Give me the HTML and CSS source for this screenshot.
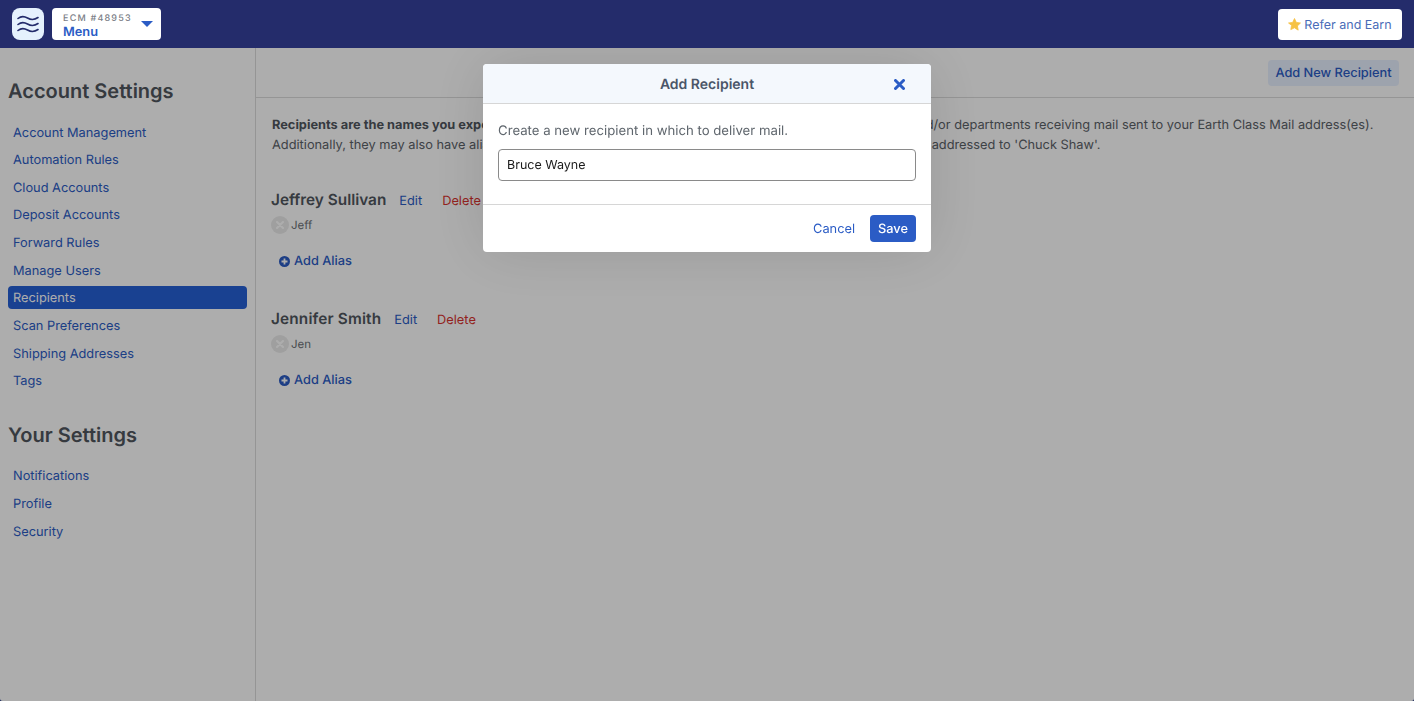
FILE: index.html
```html
<!DOCTYPE html>
<html lang="en">
<head>
<meta charset="utf-8">
<title>Recipients</title>
<link rel="stylesheet" href="styles.css">
</head>
<body>
<header class="topbar">
  <div class="topbar-left">
    <div class="logo">
      <svg width="22" height="18" viewBox="0 0 22 18" fill="none" stroke="#242c6b" stroke-width="1.6" stroke-linecap="round"><path d="M1 3.5C4 1 7 1 10.500 3S17.500 5 21 2.500"/><path d="M1 9.500C4 7 7 7 10.500 9S17.500 11 21 8.500"/><path d="M1 15.500C4 13 7 13 10.500 15S17.500 17 21 14.500"/></svg>
    </div>
    <div class="menu-btn">
      <div class="menu-text"><span class="ecm">ECM #48953</span><span class="menu-label">Menu</span></div>
      <svg class="caret" width="12" height="6" viewBox="0 0 12 6"><path d="M0 0H12L6 6Z" fill="#2b5cc5"/></svg>
    </div>
  </div>
  <div class="refer">
    <svg width="13" height="13" viewBox="0 0 24 24"><path d="M12 1l3.400 7.200 7.600 1-5.600 5.400 1.400 7.800L12 18l-6.800 3.400 1.400-7.800L1 9.200l7.600-1z" fill="#f6c244" stroke="#f6c244" stroke-width="1.500" stroke-linejoin="round"/></svg>
    <span class="refer-label">Refer and Earn</span>
  </div>
</header>
<div class="layout">
  <aside class="sidebar">
    <h2 class="side-title">Account Settings</h2>
    <nav class="side-nav">
      <a class="side-link">Account Management</a>
      <a class="side-link">Automation Rules</a>
      <a class="side-link">Cloud Accounts</a>
      <a class="side-link">Deposit Accounts</a>
      <a class="side-link">Forward Rules</a>
      <a class="side-link">Manage Users</a>
      <a class="side-link active">Recipients</a>
      <a class="side-link">Scan Preferences</a>
      <a class="side-link">Shipping Addresses</a>
      <a class="side-link">Tags</a>
    </nav>
    <h2 class="side-title second">Your Settings</h2>
    <nav class="side-nav">
      <a class="side-link">Notifications</a>
      <a class="side-link">Profile</a>
      <a class="side-link">Security</a>
    </nav>
  </aside>
  <main class="content">
    <div class="toolbar"><button class="add-new">Add New Recipient</button></div>
    <div class="body">
      <p class="intro"><b>Recipients are the names you expect to receive mail for.</b> These can be the individuals, companies, firms and/or departments receiving mail sent to your Earth Class Mail address(es).<br>Additionally, they may also have aliases. For example, 'Charles Shaw' may also want to receive all of the mail addressed to 'Chuck Shaw'.</p>
      <section class="recipient">
        <div class="rec-head"><h3 class="rec-name">Jeffrey Sullivan</h3><a class="edit">Edit</a><a class="del">Delete</a></div>
        <div class="alias"><span class="alias-x"><svg width="8" height="8" viewBox="0 0 8 8" stroke="#fff" stroke-width="2" stroke-linecap="round"><path d="M1 1L7 7M7 1L1 7"/></svg></span>Jeff</div>
        <a class="add-alias"><svg width="11" height="11" viewBox="0 0 11 11"><circle cx="5.500" cy="5.500" r="5.500" fill="#2b5cc5"/><path d="M5.500 2.500V8.500M2.500 5.500H8.500" stroke="#fff" stroke-width="1.800"/></svg>Add Alias</a>
      </section>
      <section class="recipient">
        <div class="rec-head"><h3 class="rec-name wide">Jennifer Smith</h3><a class="edit">Edit</a><a class="del">Delete</a></div>
        <div class="alias"><span class="alias-x"><svg width="8" height="8" viewBox="0 0 8 8" stroke="#fff" stroke-width="2" stroke-linecap="round"><path d="M1 1L7 7M7 1L1 7"/></svg></span>Jen</div>
        <a class="add-alias"><svg width="11" height="11" viewBox="0 0 11 11"><circle cx="5.500" cy="5.500" r="5.500" fill="#2b5cc5"/><path d="M5.500 2.500V8.500M2.500 5.500H8.500" stroke="#fff" stroke-width="1.800"/></svg>Add Alias</a>
      </section>
    </div>
  </main>
</div>
<div class="overlay"></div>
<div class="modal">
  <div class="modal-head">
    <span class="modal-title">Add Recipient</span>
    <svg class="modal-close" width="11" height="11" viewBox="0 0 11 11" stroke="#2b5cc5" stroke-width="3" stroke-linecap="round"><path d="M1.500 1.500L9.500 9.500M9.500 1.500L1.500 9.500"/></svg>
  </div>
  <div class="modal-body">
    <p class="modal-text">Create a new recipient in which to deliver mail.</p>
    <input class="modal-input" type="text" value="Bruce Wayne">
  </div>
  <div class="modal-foot">
    <a class="cancel">Cancel</a>
    <button class="save">Save</button>
  </div>
</div>
</body>
</html>
```
FILE: styles.css
```css
* { box-sizing: border-box; }
html, body { margin: 0; height: 100%; overflow: hidden; }
body { font-family: Inter, "Liberation Sans", sans-serif; font-size: 12.8px; color: #3a4047; background: #1d2a5a; text-rendering: geometricPrecision; }
.topbar { position: relative; z-index: 3; height: 48px; background: #242c6b; display: flex; align-items: center; justify-content: space-between; padding: 0 12px; }
.topbar-left { display: flex; align-items: center; gap: 8px; }
.logo { width: 32px; height: 32px; border-radius: 8px; background: #e5f1fd; display: flex; align-items: center; justify-content: center; }
.menu-btn { width: 109px; height: 32px; background: #fff; border-radius: 4px; display: flex; align-items: center; justify-content: space-between; padding: 0 8px 0 11px; }
.menu-text { display: flex; flex-direction: column; align-self: flex-start; padding-top: 5px; }
.ecm { font-size: 9px; line-height: 11px; letter-spacing: 1.200px; font-weight: 500; color: #7c8087; }
.menu-label { font-size: 12.8px; line-height: 17px; font-weight: 600; color: #2b5cc5; }
.caret { display: block; }
.refer { height: 31px; width: 124px; background: #fff; border-radius: 4px; display: flex; align-items: center; justify-content: center; gap: 3px; color: #4a6cb8; font-size: 12.5px; }
.refer-label { padding-top: 2px; }
.layout { display: flex; height: 653px; background: #fff; border-radius: 0 0 3px 3px; }
.sidebar { width: 256px; border-right: 1px solid #dcdcdc; padding: 31px 8px 0; }
.side-title { margin: 0 0 17.500px; font-size: 20px; line-height: 24px; font-weight: 600; color: #50565e; }
.side-title.second { margin-top: 30.500px; }
.side-nav { display: flex; flex-direction: column; gap: 4.650px; }
.side-link { display: block; height: 23px; line-height: 25px; padding: 0 5px; border-radius: 4px; font-size: 12.8px; color: #2b5cc5; }
.side-link.active { background: #2660d6; color: #fff; }
.content { flex: 1; min-width: 0; }
.toolbar { height: 50px; border-bottom: 1px solid #dcdcdc; display: flex; align-items: center; justify-content: flex-end; padding: 0 15px 0 0; }
.add-new { height: 26px; width: 131px; border: 0; padding: 2px 0 0; border-radius: 4px; background: #e8f0ff; color: #2b5cc5; font: 500 12.8px Inter, "Liberation Sans", sans-serif; text-rendering: geometricPrecision; }
.body { padding: 18px 16px 0 15px; }
.intro { margin: 0 0 32px 1px; font-size: 12.8px; line-height: 20px; color: #5c6268; white-space: nowrap; }
.intro b { color: #50565e; font-weight: 700; }
.recipient { margin-bottom: 38px; }
.rec-head { display: flex; align-items: baseline; height: 24px; }
.rec-name { margin: 0; font-size: 15.360px; line-height: 24px; font-weight: 600; color: #50565e; }
.rec-name.wide { letter-spacing: .15px; }
.edit { margin-left: 13px; font-size: 12.8px; color: #2b5cc5; }
.del { margin-left: 20px; font-size: 12.8px; color: #d9322e; }
.alias { display: flex; align-items: center; gap: 2px; margin-top: 4px; height: 18px; font-size: 11.500px; color: #6c7076; }
.alias-x { width: 18px; height: 18px; border-radius: 50%; background: #ebebeb; display: flex; align-items: center; justify-content: center; }
.add-alias { display: flex; align-items: center; gap: 4px; margin: 19px 0 0 8px; height: 16px; font-size: 12.8px; font-weight: 500; color: #2b5cc5; }
.overlay { position: fixed; inset: 48px 0 0 0; z-index: 1; background: rgba(0,0,0,.32); border-radius: 0 0 3px 3px; }
.modal { position: fixed; z-index: 2; left: 483px; top: 64px; width: 448px; height: 188px; background: #fff; border-radius: 4px; box-shadow: 0 0 60px rgba(0,0,0,.12); display: flex; flex-direction: column; overflow: hidden; }
.modal-head { position: relative; height: 40px; padding-top: 2px; background: #f4f8fd; border-bottom: 1px solid #d6d6d6; display: flex; align-items: center; justify-content: center; }
.modal-title { font-size: 14px; font-weight: 600; color: #4a5568; }
.modal-close { position: absolute; right: 26px; top: 15px; }
.modal-body { padding: 19px 15px 0; height: 101px; border-bottom: 1px solid #d6d6d6; }
.modal-text { margin: 0 0 10px; font-size: 13.200px; line-height: 16px; color: #5f666d; }
.modal-input { display: block; width: 418px; height: 32px; border: 1px solid #8a8a8a; border-radius: 4px; padding: 0 8px; font: 12.5px Inter, "Liberation Sans", sans-serif; text-rendering: geometricPrecision; color: #1a1a1a; background: #fff; outline: 0; }
.modal-foot { flex: 1; display: flex; align-items: center; justify-content: flex-end; gap: 15px; padding: 0 15px; }
.cancel { padding-top: 2px; font-size: 12.8px; color: #2b5cc5; }
.save { width: 46px; height: 27px; border: 0; padding: 2px 0 0; border-radius: 4px; background: #2b5cc5; color: #fff; font: 500 12.8px Inter, "Liberation Sans", sans-serif; text-rendering: geometricPrecision; }
```
